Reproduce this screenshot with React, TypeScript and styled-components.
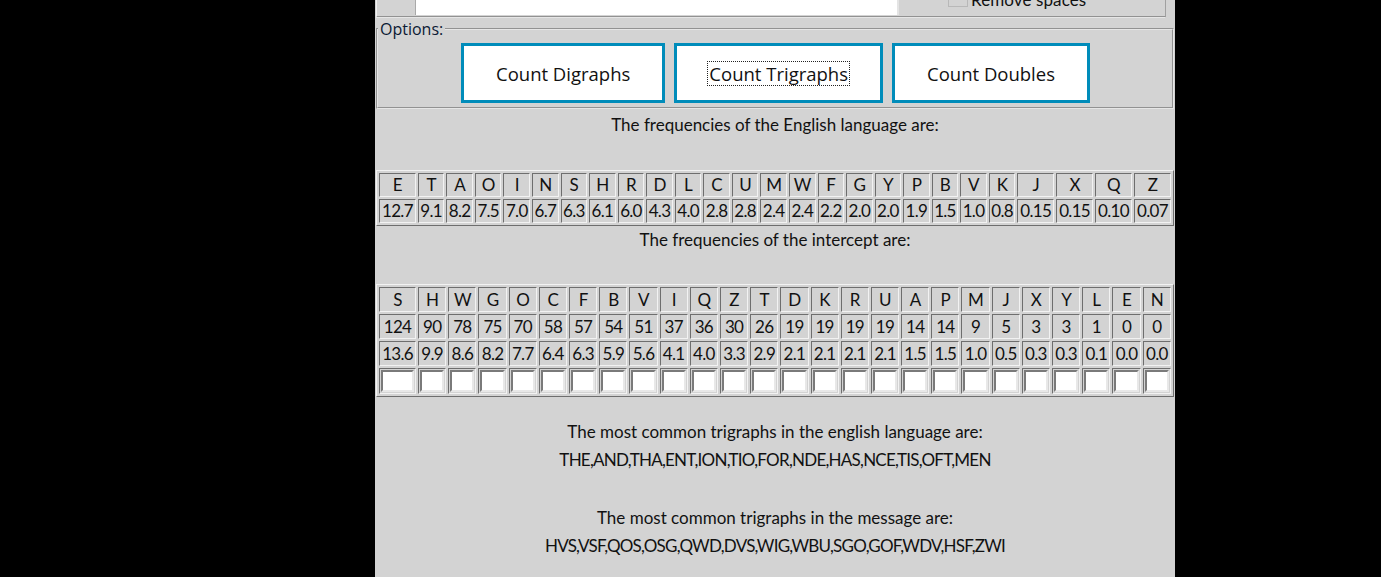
import React from "react";
import styled, { createGlobalStyle } from "styled-components";

const Global = createGlobalStyle`
  html, body { margin: 0; padding: 0; background: #000; }
  body { font-family: "Lato", "Noto Sans", sans-serif; }
`;

const Page = styled.div`
  width: 800px;
  margin-left: 375px;
  min-height: 577px;
  background: #d3d3d3;
  color: #111;
  overflow: hidden;
`;

const TopPanel = styled.div`
  height: 16px;
  margin: 0 9px 0 1px;
  border-left: 1px solid #f0f0f0;
  border-right: 1px solid #a0a0a0;
  border-bottom: 2px groove #e6e6e6;
  display: flex;
  align-items: flex-end;
  overflow: hidden;
`;

const TextArea = styled.div`
  width: 481px;
  height: 60px;
  margin-left: 38px;
  background: #fff;
  border-left: 1px solid #a9a9a9;
  border-right: 2px solid #e4e4e4;
  flex-shrink: 0;
  align-self: flex-start;
  margin-top: -45px;
`;

const CheckRow = styled.label`
  display: flex;
  align-items: flex-end;
  margin-left: 49px;
  font-family: "Lato", sans-serif;
  font-size: 17px;
  letter-spacing: 0.1px;
  line-height: 20px;
  margin-bottom: 6px;
`;

const CheckBox = styled.span`
  display: inline-block;
  width: 18px;
  height: 18px;
  border: 1px solid #b8b8b8;
  background: #d3d3d3;
  margin-right: 3px;
  margin-bottom: 3px;
`;

const Options = styled.fieldset`
  margin: 0 1px 3px;
  padding: 3px 0 4px;
  border: 2px groove #e6e6e6;
  text-align: left;
`;

const Legend = styled.legend`
  padding: 0 2px;
  margin-left: 0;
  font-family: "Open Sans", sans-serif;
  font-size: 16px;
  line-height: 22px;
  color: #0b1a33;
`;

const ButtonRow = styled.div`
  display: flex;
  justify-content: center;
  gap: 9px;
  padding-left: 1px;
`;

const ActionButton = styled.button`
  height: 60px;
  padding: 0 30px;
  background: #fff;
  border: 3px solid #008cba;
  font-family: "Open Sans", sans-serif;
  font-size: 18.5px;
  color: #111;
  cursor: pointer;
`;

const FocusRing = styled.span<{ $focused?: boolean }>`
  display: inline-block;
  padding: 0 1px;
  line-height: 23px;
  border: 1px dotted ${(p) => (p.$focused ? "#222" : "transparent")};
`;

const Caption = styled.div<{ $first?: boolean }>`
  height: 58px;
  padding-top: ${(p) => (p.$first ? 2 : 3)}px;
  box-sizing: border-box;
  text-align: center;
  font-size: 17px;
  line-height: 22px;
`;

const FreqTable = styled.table`
  width: calc(100% - 2px);
  margin: 0 auto;
  border-collapse: separate;
  border-spacing: 2px;
  border: 1px solid;
  border-color: #f2f2f2 #6e6e6e #6e6e6e #f2f2f2;
`;

const Cell = styled.td`
  padding: 1px 0;
  text-align: center;
  font-size: 17px;
  letter-spacing: -0.7px;
  line-height: 20px;
  border: 1px solid;
  border-color: #6e6e6e #f2f2f2 #f2f2f2 #6e6e6e;
  white-space: nowrap;
`;

const TallCell = styled(Cell)`
  line-height: 21px;
`;

const InputCell = styled(Cell)`
  padding: 1px;
  line-height: 0;
`;

const GuessInput = styled.input`
  width: 100%;
  min-width: 0;
  height: 22px;
  box-sizing: border-box;
  margin: 0;
  padding: 0;
  background: #fff;
  border: 2px solid;
  border-color: #7a7a7a #e8e8e8 #e8e8e8 #7a7a7a;
  outline: none;
`;

const Summary = styled.div`
  padding-top: 21px;
  text-align: center;
  font-size: 17px;
  line-height: 28px;
`;

const SummaryGroup = styled.div`
  & + & {
    margin-top: 30px;
  }
`;

const SummaryTitle = styled.div`
  letter-spacing: 0;
`;

const SummaryList = styled.div`
  letter-spacing: -0.75px;
`;

const english: [string, string][] = [
  ["E", "12.7"], ["T", "9.1"], ["A", "8.2"], ["O", "7.5"], ["I", "7.0"],
  ["N", "6.7"], ["S", "6.3"], ["H", "6.1"], ["R", "6.0"], ["D", "4.3"],
  ["L", "4.0"], ["C", "2.8"], ["U", "2.8"], ["M", "2.4"], ["W", "2.4"],
  ["F", "2.2"], ["G", "2.0"], ["Y", "2.0"], ["P", "1.9"], ["B", "1.5"],
  ["V", "1.0"], ["K", "0.8"], ["J", "0.15"], ["X", "0.15"], ["Q", "0.10"],
  ["Z", "0.07"],
];

const intercept: [string, number, string][] = [
  ["S", 124, "13.6"], ["H", 90, "9.9"], ["W", 78, "8.6"], ["G", 75, "8.2"],
  ["O", 70, "7.7"], ["C", 58, "6.4"], ["F", 57, "6.3"], ["B", 54, "5.9"],
  ["V", 51, "5.6"], ["I", 37, "4.1"], ["Q", 36, "4.0"], ["Z", 30, "3.3"],
  ["T", 26, "2.9"], ["D", 19, "2.1"], ["K", 19, "2.1"], ["R", 19, "2.1"],
  ["U", 19, "2.1"], ["A", 14, "1.5"], ["P", 14, "1.5"], ["M", 9, "1.0"],
  ["J", 5, "0.5"], ["X", 3, "0.3"], ["Y", 3, "0.3"], ["L", 1, "0.1"],
  ["E", 0, "0.0"], ["N", 0, "0.0"],
];

export default function App() {
  return (
    <>
      <Global />
      <Page>
        <TopPanel>
          <TextArea />
          <CheckRow>
            <CheckBox />
            Remove spaces
          </CheckRow>
        </TopPanel>

        <Options>
          <Legend>Options:</Legend>
          <ButtonRow>
            <ActionButton>
              <FocusRing>Count Digraphs</FocusRing>
            </ActionButton>
            <ActionButton>
              <FocusRing $focused>Count Trigraphs</FocusRing>
            </ActionButton>
            <ActionButton>
              <FocusRing>Count Doubles</FocusRing>
            </ActionButton>
          </ButtonRow>
        </Options>

        <Caption $first>The frequencies of the English language are:</Caption>
        <FreqTable>
          <tbody>
            <tr>
              {english.map(([l]) => (
                <Cell key={l}>{l}</Cell>
              ))}
            </tr>
            <tr>
              {english.map(([l, v]) => (
                <Cell key={l}>{v}</Cell>
              ))}
            </tr>
          </tbody>
        </FreqTable>

        <Caption>The frequencies of the intercept are:</Caption>
        <FreqTable>
          <tbody>
            <tr>
              {intercept.map(([l]) => (
                <TallCell key={l}>{l}</TallCell>
              ))}
            </tr>
            <tr>
              {intercept.map(([l, c]) => (
                <TallCell key={l}>{c}</TallCell>
              ))}
            </tr>
            <tr>
              {intercept.map(([l, , p]) => (
                <TallCell key={l}>{p}</TallCell>
              ))}
            </tr>
            <tr>
              {intercept.map(([l]) => (
                <InputCell key={l}>
                  <GuessInput type="text" />
                </InputCell>
              ))}
            </tr>
          </tbody>
        </FreqTable>

        <Summary>
          <SummaryGroup>
            <SummaryTitle>The most common trigraphs in the english language are:</SummaryTitle>
            <SummaryList>THE,AND,THA,ENT,ION,TIO,FOR,NDE,HAS,NCE,TIS,OFT,MEN</SummaryList>
          </SummaryGroup>
          <SummaryGroup>
            <SummaryTitle>The most common trigraphs in the message are:</SummaryTitle>
            <SummaryList>HVS,VSF,QOS,OSG,QWD,DVS,WIG,WBU,SGO,GOF,WDV,HSF,ZWI</SummaryList>
          </SummaryGroup>
        </Summary>
      </Page>
    </>
  );
}
